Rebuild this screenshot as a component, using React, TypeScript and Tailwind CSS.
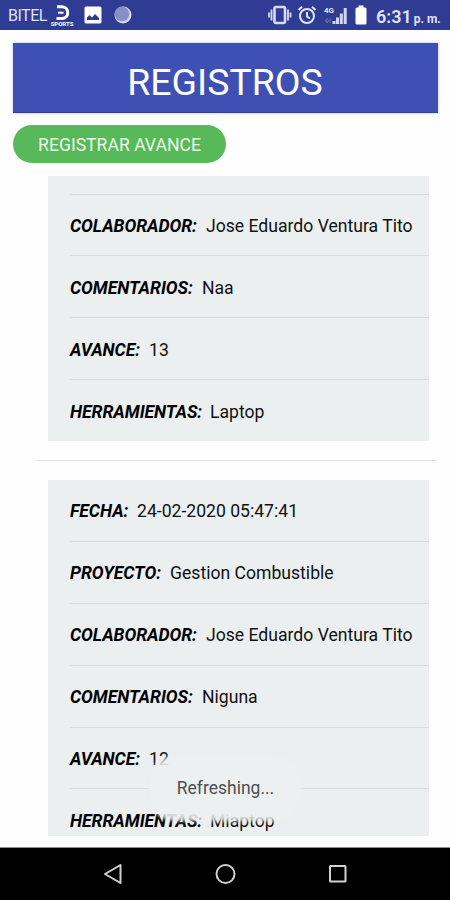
// Registros screen: list of progress records
type Field = { label: string; value: string; labelClass: string };

const COLABORADOR: Field = {
  label: 'COLABORADOR:', value: 'Jose Eduardo Ventura Tito', labelClass: 'w-[136px]',
};

const first: Field[] = [
  COLABORADOR,
  { label: 'COMENTARIOS:', value: 'Naa', labelClass: 'w-[132px]' },
  { label: 'AVANCE:', value: '13', labelClass: 'w-[79px]' },
  { label: 'HERRAMIENTAS:', value: 'Laptop', labelClass: 'w-[140px]' },
];

const second: Field[] = [
  { label: 'FECHA:', value: '24-02-2020 05:47:41', labelClass: 'w-[67px]' },
  { label: 'PROYECTO:', value: 'Gestion Combustible', labelClass: 'w-[100px]' },
  COLABORADOR,
  { label: 'COMENTARIOS:', value: 'Niguna', labelClass: 'w-[132px]' },
  { label: 'AVANCE:', value: '12', labelClass: 'w-[79px]' },
  { label: 'HERRAMIENTAS:', value: 'Miaptop', labelClass: 'w-[140px]' },
];

function Row({ field, last }: { field: Field; last?: boolean }) {
  return (
    <div className={`ml-[22px] flex h-[61.9px] shrink-0 items-center whitespace-nowrap pt-[2px] text-[17.6px] text-[#111] ${last ? '' : 'border-b border-[#d7dcdd]'}`}>
      <span className={`shrink-0 font-bold italic tracking-[-0.05px] text-black ${field.labelClass}`}>{field.label}</span>
      <span>{field.value}</span>
    </div>
  );
}

function StatusBar() {
  return (
    <div className="flex h-[30px] shrink-0 items-center bg-[#303c93] pl-2 text-[#dfe3f7]">
      <span className="w-[41px] pt-[2px] text-[16px] leading-none tracking-[-0.5px]">BITEL</span>
      <div className="flex w-[26px] flex-col items-center pt-px">
        <svg width="18" height="16" viewBox="0 0 18 16" fill="none" stroke="#fff">
          <path d="M4 1.8H8.5C16.8 1.8 16.8 13.6 8.5 13.6H3.5" strokeWidth="3" />
          <path d="M5 7.7H10.5" strokeWidth="2" />
        </svg>
        <span className="text-[6px] font-bold leading-[5px] text-white">SPORTS</span>
      </div>
      <svg className="ml-[9px]" width="18" height="18" viewBox="0 0 18 18">
        <rect x="0.5" y="0.5" width="17" height="17" rx="1.5" fill="#fff" />
        <path d="M3 14V11.5L5.5 9L8 11.5L11 8L15 12V14Z" fill="#303c93" />
      </svg>
      <svg className="ml-3" width="18" height="18" viewBox="0 0 18 18">
        <circle cx="9" cy="9" r="8.5" fill="#d5d8eb" />
        <circle cx="8" cy="8" r="7.3" fill="#8690c4" />
      </svg>
      <svg className="ml-[136px]" width="24" height="20" viewBox="0 0 24 20" fill="none" stroke="#d7dcf3" strokeWidth="1.8">
        <rect x="6.5" y="2" width="10.5" height="16" rx="1.5" strokeWidth="2.6" />
        <path d="M3.5 4.5V15.5M20 4.5V15.5M1 7.5V12.5M22.5 7.5V12.5" />
      </svg>
      <svg className="ml-[5px]" width="20" height="20" viewBox="0 0 20 20" fill="none" stroke="#e2e6fa" strokeWidth="2">
        <circle cx="10" cy="11" r="7" />
        <path d="M10 7V11.5L13 13.5M1.5 5L5 1.8M18.5 5L15 1.8" />
      </svg>
      <div className="relative ml-[7px] h-[20px] w-[24px]">
        <svg width="24" height="20" viewBox="0 0 24 20">
          <path d="M8.5 19V16H11.5V19ZM12 19V12.5H15V19ZM15.8 19V8.5H18.8V19ZM19.7 19V3H22.7V19Z" fill="#d2d8f1" />
          <path d="M3 13V18M1 15L3 18L5 15M6 18V13" stroke="#6570b6" fill="none" />
        </svg>
        <span className="absolute left-0 top-[2px] text-[8px] font-bold leading-none">4G</span>
      </div>
      <svg className="ml-[7px]" width="12" height="20" viewBox="0 0 12 20">
        <path d="M3.5 0.5H8.5V2.5H10Q11.5 2.5 11.5 4V18Q11.5 19.5 10 19.5H2Q0.5 19.5 0.5 18V4Q0.5 2.5 2 2.5H3.5Z" fill="#fff" />
      </svg>
      <span className="ml-[9px] whitespace-nowrap pt-[3px] text-[18px] font-semibold leading-none">6:31</span>
      <span className="ml-[2px] mt-[7px] whitespace-nowrap text-[12px] font-bold leading-none">p. m.</span>
    </div>
  );
}

export default function App() {
  return (
    <div className="relative flex h-[900px] w-[450px] flex-col overflow-hidden bg-[#fefefe] font-[Roboto,sans-serif]">
      <StatusBar />

      <h1 className="mx-auto mt-[13px] flex h-[70px] w-[425px] shrink-0 items-center justify-center border-b border-[#2e3f9c] bg-[#3e50b4] pt-[9px] text-[37.4px] text-white shadow-[0_0_3px_#bfc8e8]">
        REGISTROS
      </h1>

      <button className="ml-[13px] mt-3 h-[38px] w-[213px] shrink-0 rounded-full bg-[#57b959] pt-[3px] text-[17.6px] text-[#eef9e9]">
        REGISTRAR AVANCE
      </button>

      <div className="ml-12 mt-[13px] h-[265px] w-[381px] shrink-0 overflow-hidden bg-[#ebeff0]">
        <div className="ml-[22px] h-[18.5px] border-b border-[#d7dcdd]" />
        {first.map((f, i) => (
          <Row key={f.label} field={f} last={i === first.length - 1} />
        ))}
      </div>

      <hr className="ml-[37px] mt-[19px] w-[400px] shrink-0 border-[#e2e3e4]" />

      <div className="ml-12 mt-[19px] h-[356px] w-[381px] shrink-0 overflow-hidden bg-[#ebeff0]">
        {second.map((f, i) => (
          <Row key={f.label} field={f} last={i === second.length - 1} />
        ))}
      </div>

      {/* toast */}
      <div className="absolute left-[149px] top-[756px] flex h-[65px] w-[153px] items-center justify-center">
        <div className="absolute inset-0 rounded-[26px] bg-[#edf0f0]/90 blur-[2px]" />
        <span className="relative text-[17.5px] text-[#4d4f50]">Refreshing...</span>
      </div>

      <div className="mt-auto flex h-[53px] shrink-0 items-center justify-between border-t border-[#8a8d8e] bg-black pl-[103px] pr-[101px]">
        <svg width="22" height="22" viewBox="0 0 22 22" fill="none" stroke="#d3cfd2" strokeWidth="2" strokeLinejoin="round">
          <path d="M17.5 2V20L2 11Z" />
        </svg>
        <svg width="22" height="22" viewBox="0 0 22 22" fill="none" stroke="#d3cfd2" strokeWidth="2">
          <circle cx="10.5" cy="11" r="9" />
        </svg>
        <svg width="22" height="22" viewBox="0 0 22 22" fill="none" stroke="#d3cfd2" strokeWidth="2">
          <rect x="3" y="3" width="15.5" height="15.5" rx="0.5" />
        </svg>
      </div>
    </div>
  );
}
